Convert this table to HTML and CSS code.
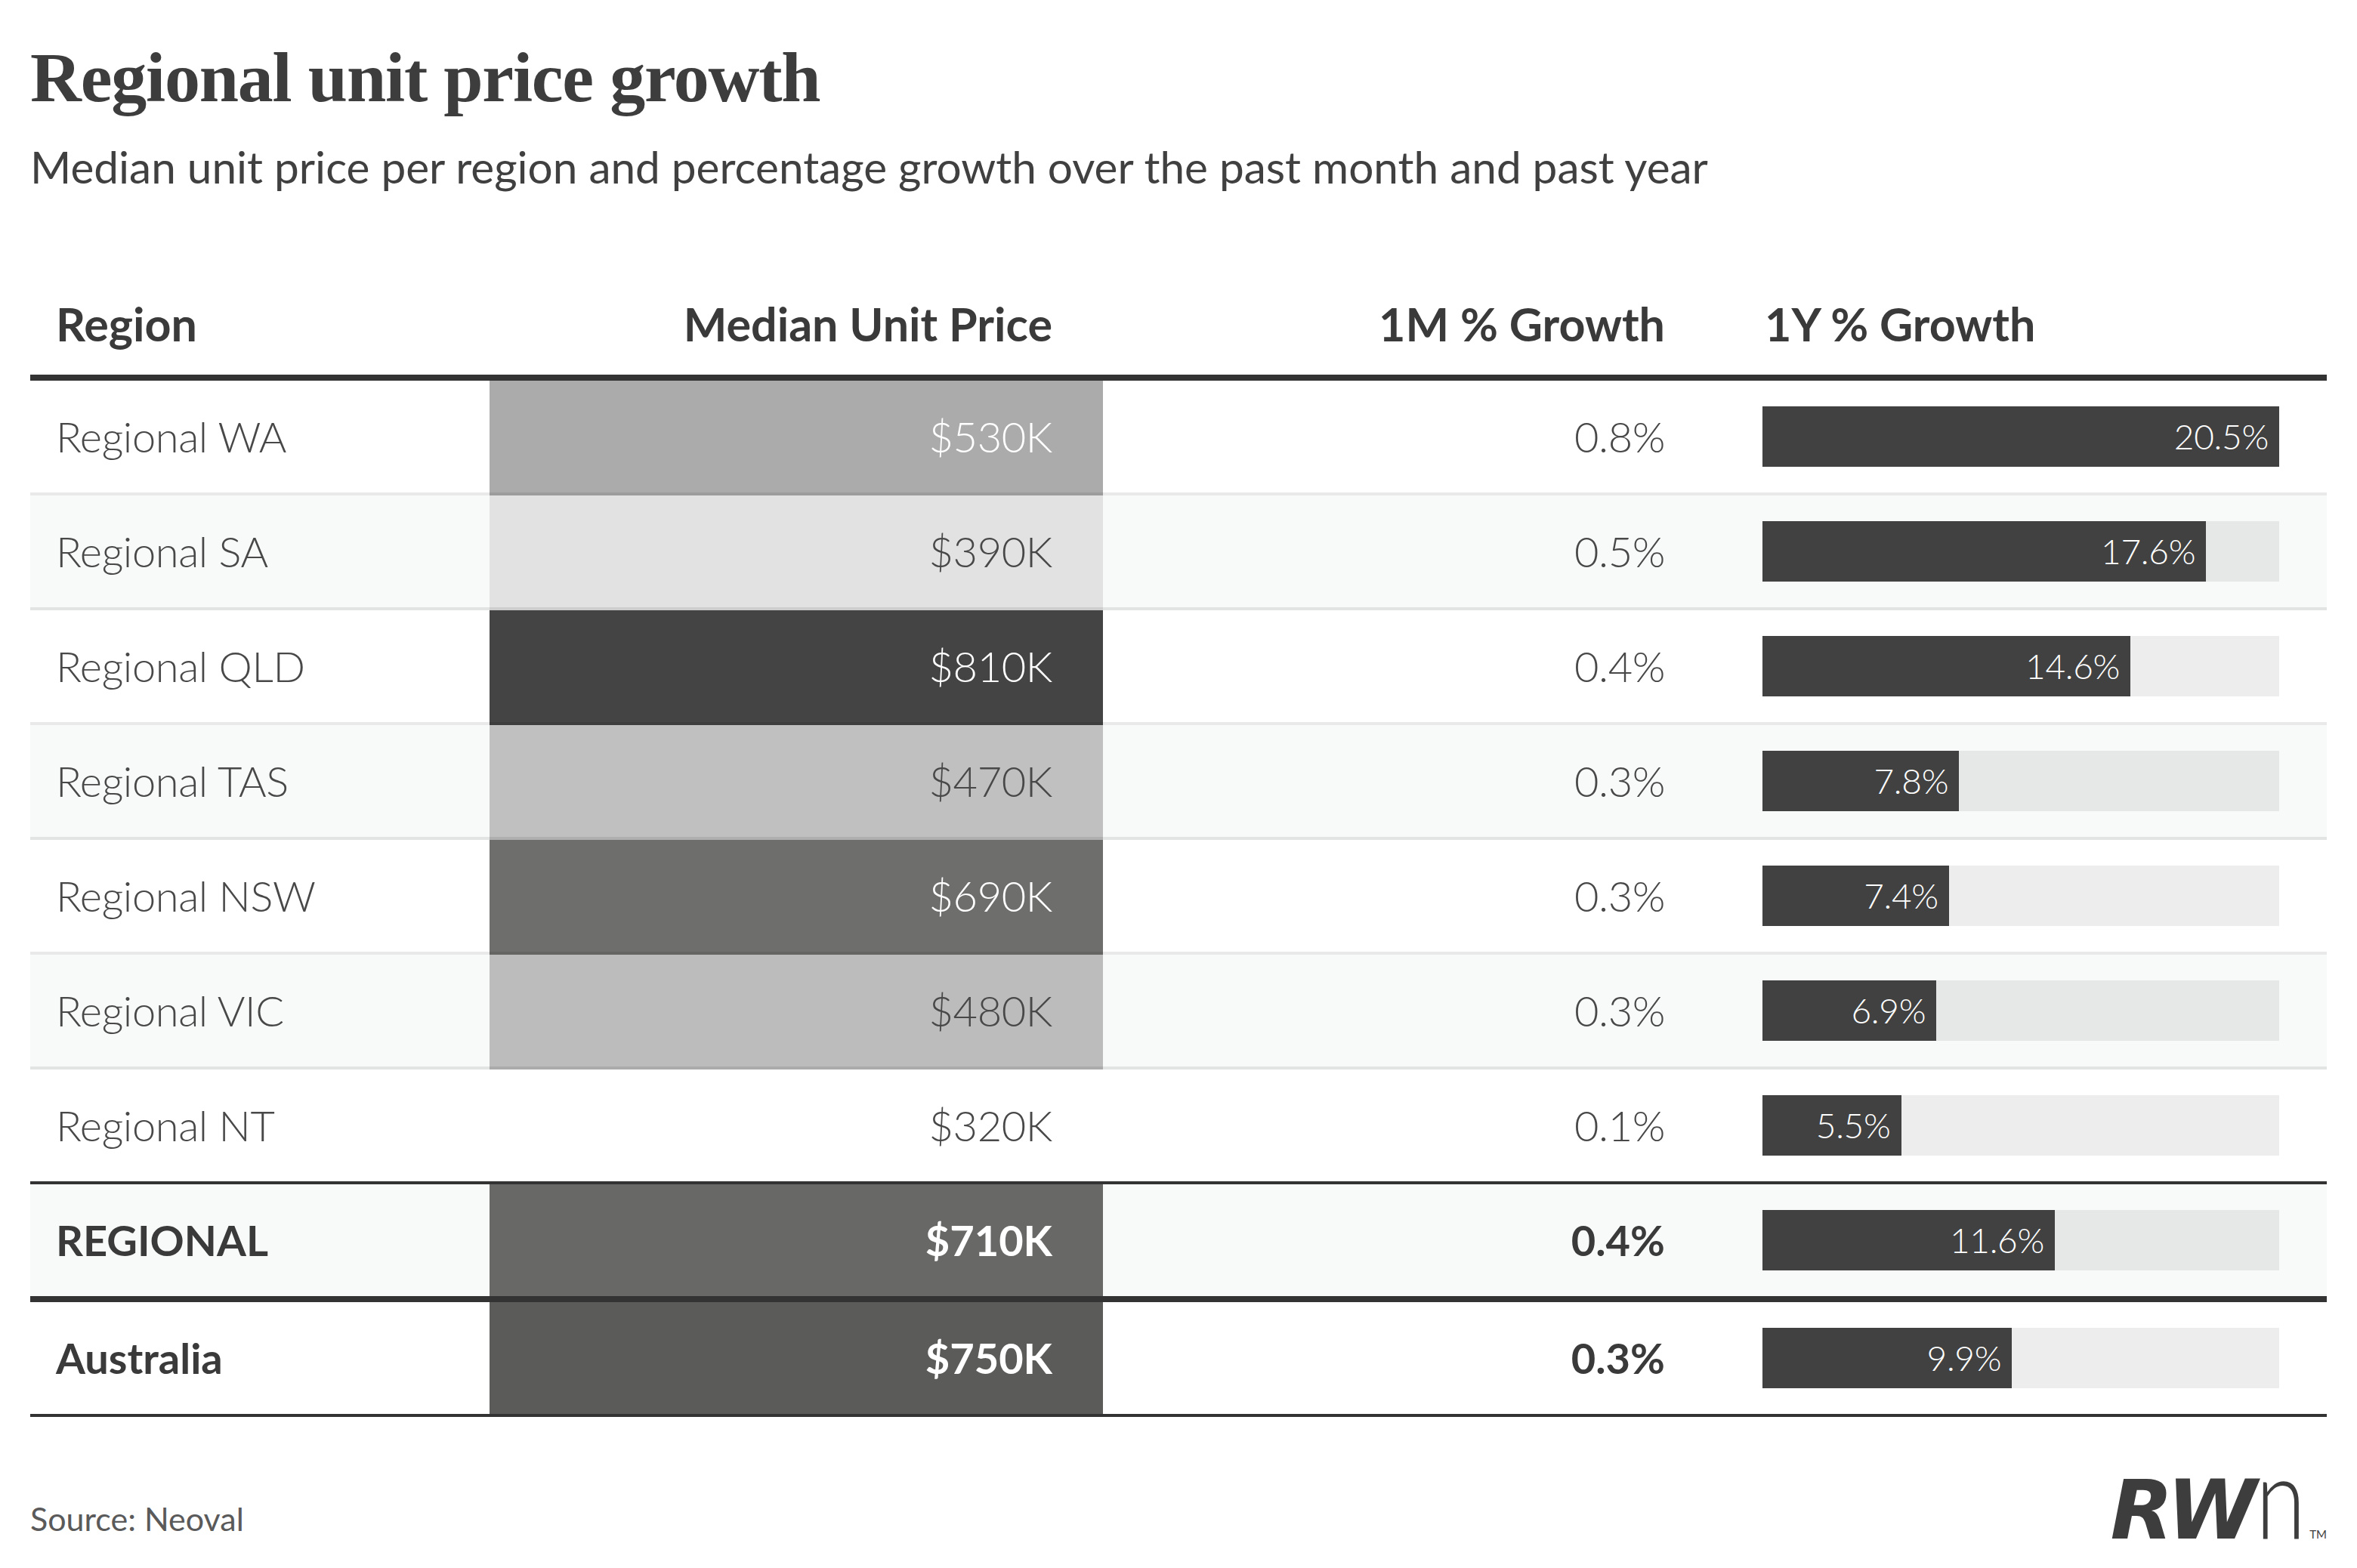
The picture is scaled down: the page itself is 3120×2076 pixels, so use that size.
FILE: index.html
```html
<!DOCTYPE html>
<html lang="en">
<head>
<meta charset="utf-8">
<title>Regional unit price growth</title>
<link rel="stylesheet" href="styles.css">
</head>
<body>
<div class="page">
  <h1 class="title">Regional unit price growth</h1>
  <p class="subtitle">Median unit price per region and percentage growth over the past month and past year</p>

  <div class="table">
    <div class="thead">
      <div class="th th-region">Region</div>
      <div class="th th-num th-price">Median Unit Price</div>
      <div class="th th-num th-m">1M % Growth</div>
      <div class="th th-y">1Y % Growth</div>
    </div>

    <div class="tr">
      <div class="td td-region">Regional WA</div>
      <div class="td td-price shade-530 on-dark">$530K</div>
      <div class="td td-m">0.8%</div>
      <div class="td td-y"><div class="track"><div class="fill" style="width:100%">20.5%</div></div></div>
    </div>
    <div class="tr alt">
      <div class="td td-region">Regional SA</div>
      <div class="td td-price shade-390">$390K</div>
      <div class="td td-m">0.5%</div>
      <div class="td td-y"><div class="track"><div class="fill" style="width:85.85%">17.6%</div></div></div>
    </div>
    <div class="tr">
      <div class="td td-region">Regional QLD</div>
      <div class="td td-price shade-810 on-dark">$810K</div>
      <div class="td td-m">0.4%</div>
      <div class="td td-y"><div class="track"><div class="fill" style="width:71.22%">14.6%</div></div></div>
    </div>
    <div class="tr alt">
      <div class="td td-region">Regional TAS</div>
      <div class="td td-price shade-470">$470K</div>
      <div class="td td-m">0.3%</div>
      <div class="td td-y"><div class="track"><div class="fill" style="width:38.05%">7.8%</div></div></div>
    </div>
    <div class="tr">
      <div class="td td-region">Regional NSW</div>
      <div class="td td-price shade-690 on-dark">$690K</div>
      <div class="td td-m">0.3%</div>
      <div class="td td-y"><div class="track"><div class="fill" style="width:36.10%">7.4%</div></div></div>
    </div>
    <div class="tr alt">
      <div class="td td-region">Regional VIC</div>
      <div class="td td-price shade-480">$480K</div>
      <div class="td td-m">0.3%</div>
      <div class="td td-y"><div class="track"><div class="fill" style="width:33.66%">6.9%</div></div></div>
    </div>
    <div class="tr last-regional">
      <div class="td td-region">Regional NT</div>
      <div class="td td-price">$320K</div>
      <div class="td td-m">0.1%</div>
      <div class="td td-y"><div class="track"><div class="fill" style="width:26.83%">5.5%</div></div></div>
    </div>
    <div class="tr alt total total-regional">
      <div class="td td-region">REGIONAL</div>
      <div class="td td-price shade-710 on-dark">$710K</div>
      <div class="td td-m">0.4%</div>
      <div class="td td-y"><div class="track"><div class="fill" style="width:56.59%">11.6%</div></div></div>
    </div>
    <div class="tr total total-australia">
      <div class="td td-region">Australia</div>
      <div class="td td-price shade-750 on-dark">$750K</div>
      <div class="td td-m">0.3%</div>
      <div class="td td-y"><div class="track"><div class="fill" style="width:48.29%">9.9%</div></div></div>
    </div>
  </div>

  <div class="footer">
    <div class="source">Source: Neoval</div>
    <div class="logo"><span class="logo-rw">RW</span><span class="logo-n">n</span><span class="logo-tm">TM</span></div>
  </div>
</div>
</body>
</html>
```

FILE: styles.css
```css
html, body {
  margin: 0;
  padding: 0;
  background: #ffffff;
}

body {
  font-family: Lato, "Noto Sans", "Liberation Sans", sans-serif;
  color: #404040;
}

.page {
  width: 3120px;
  height: 2076px;
  box-sizing: border-box;
  padding: 0 40px 22px;
  display: flex;
  flex-direction: column;
  overflow: hidden;
}

.title {
  font-family: "Liberation Serif", "DejaVu Serif", serif;
  font-weight: 700;
  font-size: 94px;
  line-height: 108px;
  letter-spacing: -1.2px;
  color: #3d3d3d;
  margin: 48px 0 0;
}

.subtitle {
  font-size: 58.5px;
  line-height: 72px;
  font-weight: 400;
  color: #404040;
  margin: 28px 0 0;
}

.table {
  margin-top: 137px;
}

.thead,
.tr {
  display: grid;
  grid-template-columns: 608px 812px 810px 810px;
}

.thead {
  border-bottom: 8px solid #333333;
}

.th {
  font-weight: 700;
  font-size: 61px;
  line-height: 72px;
  color: #3a3a3a;
  padding-bottom: 31px;
}

.th-region {
  padding-left: 34px;
}

.th-num {
  text-align: right;
}

.th-price {
  padding-right: 67px;
}

.th-m {
  padding-right: 66px;
}

.th-y {
  padding-left: 66px;
}

.tr {
  background: #ffffff;
}

.tr.alt {
  background: #f8f9f9;
}

.td {
  height: 148px;
  border-bottom: 4px solid rgba(0, 0, 0, 0.085);
  display: flex;
  align-items: center;
  font-family: "Lato Light", Lato, "Noto Sans", sans-serif;
  font-size: 56px;
  font-weight: 300;
  letter-spacing: -0.4px;
  line-height: 1.2;
  color: #484848;
}

.td-region {
  padding-left: 34px;
}

.td-price {
  justify-content: flex-end;
  padding-right: 67px;
}

.td-m {
  justify-content: flex-end;
  padding-right: 66px;
}

.td-y {
  padding: 0 63px 0 63px;
}

.shade-530 { background: #ababab; }
.shade-390 { background: #e2e2e2; }
.shade-810 { background: #444444; }
.shade-470 { background: #c0c0c0; }
.shade-690 { background: #6e6e6d; }
.shade-480 { background: #bcbcbc; }
.shade-710 { background: #686867; }
.shade-750 { background: #5b5b5a; }

.td.on-dark {
  color: #ffffff;
}

.last-regional .td {
  border-bottom-color: #333333;
}

.total .td {
  font-family: Lato, "Noto Sans", sans-serif;
  font-weight: 700;
  letter-spacing: 0;
  color: #3a3a3a;
}

.total .td.on-dark {
  color: #ffffff;
}

.total-regional .td {
  border-bottom: 8px solid #333333;
}

.total-australia .td {
  border-bottom: 4px solid #333333;
}

.track {
  flex: 1;
  height: 80px;
  background: rgba(0, 0, 0, 0.07);
  display: flex;
}

.fill {
  height: 100%;
  background: #414141;
  box-sizing: border-box;
  padding-right: 14px;
  display: flex;
  align-items: center;
  justify-content: flex-end;
  color: #ffffff;
  font-family: "Lato Light", Lato, "Noto Sans", sans-serif;
  font-size: 46px;
  font-weight: 300;
  letter-spacing: -0.3px;
  white-space: nowrap;
}

.footer {
  margin-top: auto;
  display: flex;
  justify-content: space-between;
  align-items: flex-end;
}

.source {
  font-size: 43px;
  line-height: 1.2;
  color: #5a5a5a;
  margin-bottom: 17px;
}

.logo {
  display: flex;
  align-items: baseline;
  color: #3d3d3d;
  line-height: 1;
}

.logo-rw {
  font-family: "DejaVu Sans", Lato, sans-serif;
  font-weight: 700;
  font-style: oblique;
  font-size: 108px;
  letter-spacing: -8px;
}

.logo-n {
  font-family: "Lato Light", Lato, sans-serif;
  font-weight: 300;
  font-size: 150px;
  transform: scaleX(0.8);
  transform-origin: left center;
  margin-left: 6px;
  margin-right: -17px;
}

.logo-tm {
  font-size: 15px;
  font-weight: 400;
  margin-left: 6px;
}
```
